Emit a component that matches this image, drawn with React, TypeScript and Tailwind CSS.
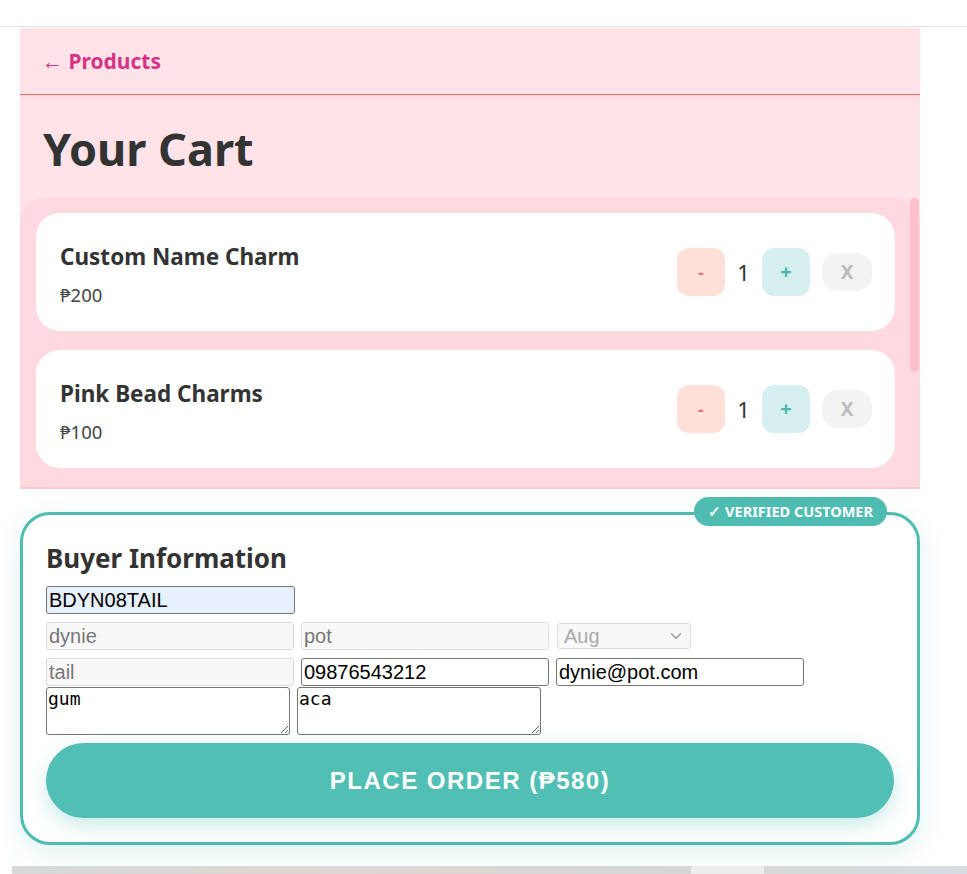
import { ChevronDown } from 'lucide-react';

type CartItem = { id: number; name: string; price: number; qty: number };

const items: CartItem[] = [
  { id: 1, name: 'Custom Name Charm', price: 200, qty: 1 },
  { id: 2, name: 'Pink Bead Charms', price: 100, qty: 1 },
  { id: 3, name: 'Heart Phone Strap', price: 280, qty: 1 },
];

const heading = "font-['Noto_Sans','Open_Sans',sans-serif]";
const field = "font-['Liberation_Sans',Arial,sans-serif] text-[20px] h-[28px] px-[2px] rounded-[3px] border outline-none";

function CartRow({ item }: { item: CartItem }) {
  return (
    <div className="bg-white rounded-[24px] h-[118px] pl-6 pr-[23px] flex items-center justify-between shrink-0">
      <div className="pt-[7px]">
        <h3 className={`${heading} text-[22.5px] font-bold text-[#333] leading-tight`}>{item.name}</h3>
        <p className={`${heading} text-[18.5px] text-[#444] mt-[10px]`}>₱{item.price}</p>
      </div>
      <div className="flex items-center">
        <button className="w-12 h-12 rounded-xl bg-[#ffe0d8] text-[#e57373] font-bold text-lg">-</button>
        <span className={`${heading} w-[37px] text-center text-[22px] text-[#333]`}>{item.qty}</span>
        <button className="w-12 h-12 rounded-xl bg-[#d6eff0] text-[#4db6ac] font-bold text-xl">+</button>
        <button className={`${heading} ml-3 w-[50px] h-[38px] rounded-2xl bg-[#f3f3f3] text-[#bdbdbd] font-bold text-[19px]`}>X</button>
      </div>
    </div>
  );
}

export default function App() {
  const total = 580;

  return (
    <div className="min-h-[874px] bg-white overflow-hidden">
      {/* top strip */}
      <div className="h-[27px] border-b border-[#e2e2e2]" />

      <div className="w-[900px] ml-5 mt-px">
        {/* pink cart area */}
        <div className="bg-[#ffe3e8]">
          <div className="h-[67px] px-[22px] flex items-center border-b border-[#f26d6d] shadow-[0_3px_5px_rgba(240,107,107,0.08)]">
            <a className={`${heading} text-[21px] font-bold text-[#d63384] pt-[2px]`}>← Products</a>
          </div>
          <h1 className={`${heading} px-[23px] pt-[24px] pb-[19px] text-[45px] leading-[60px] font-bold text-[#333]`}>Your Cart</h1>

          <div className="h-[291px] flex rounded-t-[24px] bg-[#ffd9e0] border-b-2 border-[#ffc6d0]">
            <div className="flex-1 overflow-hidden pl-4 pr-[15px] py-[15px] flex flex-col gap-[19px]">
              {items.map((item) => (
                <CartRow key={item.id} item={item} />
              ))}
            </div>
            {/* scrollbar */}
            <div className="w-[10px] pr-px">
              <div className="h-[174px] rounded-full bg-[#ffc0cb]" />
            </div>
          </div>
        </div>

        {/* buyer details */}
        <div className="relative mt-[23px] border-[3px] border-[#4fbcb1] rounded-[30px] bg-white px-[23px] pt-[27px] pb-[24px] shadow-[0_8px_28px_rgba(78,189,177,0.18)]">
          <span className={`${heading} absolute -top-[18px] right-[30px] h-[29px] px-[14px] flex items-center rounded-full bg-[#4fbcb1] text-white text-[14.5px] font-bold`}>
            ✓ VERIFIED CUSTOMER
          </span>
          <h2 className={`${heading} text-[26px] font-bold text-[#333] leading-[32px]`}>Buyer Information</h2>

          <div className="mt-[12px] flex flex-col">
            <input className={`${field} w-[249px] bg-[#e8f0fe] border-[#767676] text-black`} defaultValue="BDYN08TAIL" />

            <div className="mt-2 flex items-center gap-[7px]">
              <input disabled className={`${field} w-[248px] bg-[#f8f8f8] border-[#dddddd] text-[#777]`} defaultValue="dynie" />
              <input disabled className={`${field} w-[248px] bg-[#f8f8f8] border-[#dddddd] text-[#777]`} defaultValue="pot" />
              <div className="ml-px w-[134px] h-[26px] border border-[#dddddd] rounded-[3px] bg-[#f8f8f8] flex items-center justify-between pl-[6px] pr-[5px]">
                <span className="font-['Liberation_Sans',Arial,sans-serif] text-[20px] text-[#aaa]">Aug</span>
                <ChevronDown className="w-[18px] h-[18px] text-[#999]" strokeWidth={2} />
              </div>
            </div>

            <div className="mt-2 flex items-center gap-[7px]">
              <input disabled className={`${field} w-[248px] bg-[#f8f8f8] border-[#dddddd] text-[#777]`} defaultValue="tail" />
              <input className={`${field} w-[248px] bg-white border-[#767676] text-black`} defaultValue="09876543212" />
              <input className={`${field} w-[248px] bg-white border-[#767676] text-black`} defaultValue="dynie@pot.com" />
            </div>

            <div className="mt-px flex gap-[7px]">
              <textarea className="w-[244px] h-[48px] border border-[#767676] rounded-[3px] px-[1px] font-['DejaVu_Sans_Mono',monospace] text-[18px] leading-[22px] text-black outline-none" defaultValue="gum" />
              <textarea className="w-[244px] h-[48px] border border-[#767676] rounded-[3px] px-[1px] font-['DejaVu_Sans_Mono',monospace] text-[18px] leading-[22px] text-black outline-none" defaultValue="aca" />
            </div>
          </div>

          <button className="mt-2 w-full h-[75px] rounded-full bg-[#52bfb5] text-white font-['Liberation_Sans',Arial,sans-serif] font-bold text-[24px] tracking-[1.5px] shadow-[0_8px_20px_rgba(78,189,177,0.3)]">
            PLACE ORDER (₱{total})
          </button>
        </div>
      </div>

      {/* next section peeking in */}
      <div className="mt-[21px] h-[12px] ml-3 flex">
        <div className="flex-1 bg-gradient-to-r from-[#d9d9d9] via-[#e0d8d6] to-[#d8d8d8]" />
        <div className="w-[73px] bg-[#efefef]" />
        <div className="w-[203px] bg-gradient-to-r from-[#dcdcdc] to-[#d6dde0]" />
      </div>
    </div>
  );
}
